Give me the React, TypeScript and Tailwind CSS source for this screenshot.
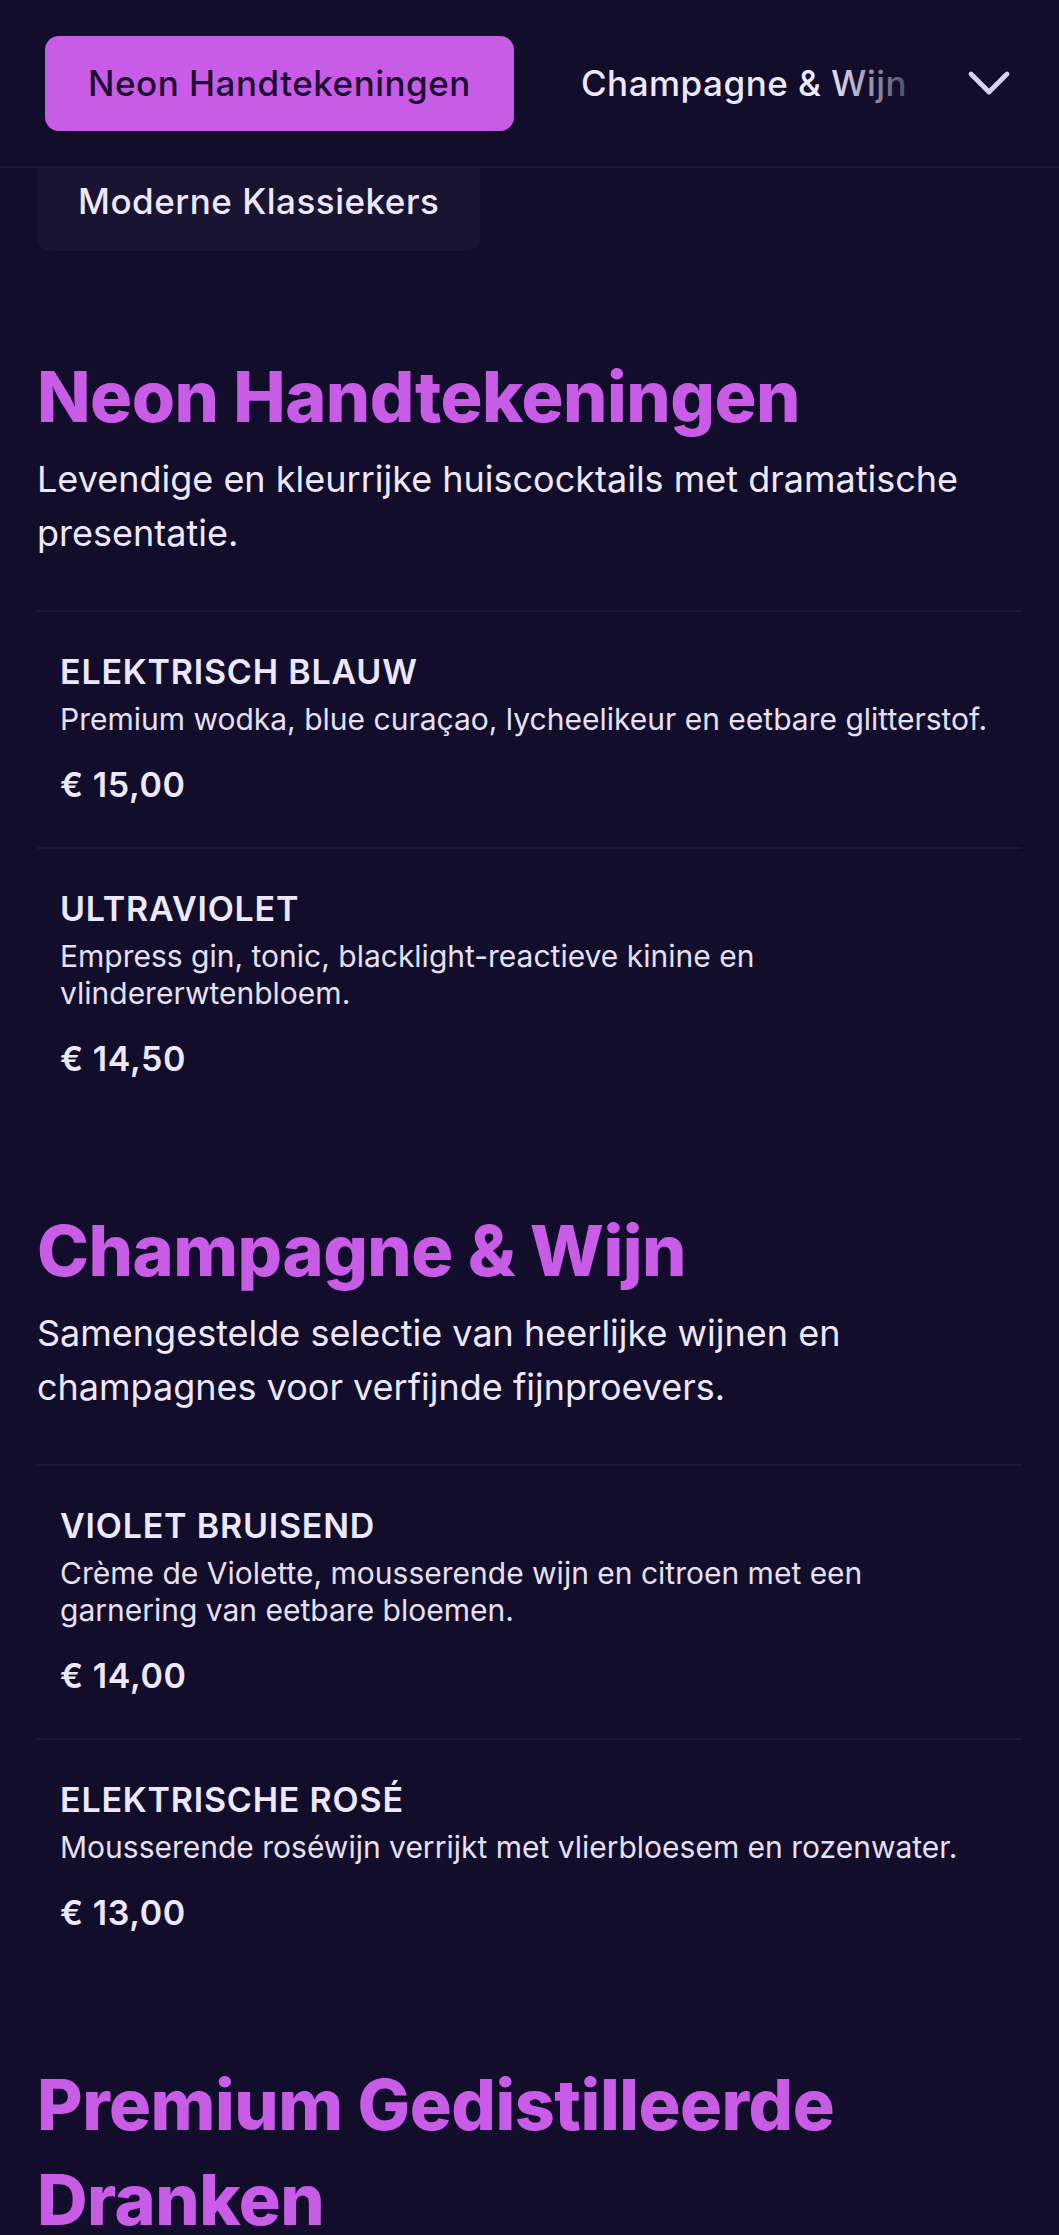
import React from 'react';
import { ChevronDown } from 'lucide-react';

type Item = { name: string; description: string; price: string };
type Section = { title: string; description?: string; items: Item[] };

const sections: Section[] = [
  {
    title: 'Neon Handtekeningen',
    description: 'Levendige en kleurrijke huiscocktails met dramatische presentatie.',
    items: [
      {
        name: 'Elektrisch Blauw',
        description: 'Premium wodka, blue curaçao, lycheelikeur en eetbare glitterstof.',
        price: '€ 15,00',
      },
      {
        name: 'Ultraviolet',
        description: 'Empress gin, tonic, blacklight-reactieve kinine en vlindererwtenbloem.',
        price: '€ 14,50',
      },
    ],
  },
  {
    title: 'Champagne & Wijn',
    description: 'Samengestelde selectie van heerlijke wijnen en champagnes voor verfijnde fijnproevers.',
    items: [
      {
        name: 'Violet Bruisend',
        description: 'Crème de Violette, mousserende wijn en citroen met een garnering van eetbare bloemen.',
        price: '€ 14,00',
      },
      {
        name: 'Elektrische Rosé',
        description: 'Mousserende roséwijn verrijkt met vlierbloesem en rozenwater.',
        price: '€ 13,00',
      },
    ],
  },
  {
    // rest of this section is below the fold
    title: 'Premium Gedistilleerde Dranken',
    items: [],
  },
];

const MenuItem: React.FC<{ item: Item }> = ({ item }) => (
  <div className="border-t-2 border-[#1c1736] px-[23px] pt-[40px] pb-[42px]">
    <h3 className="text-[34px] leading-[40px] font-semibold tracking-[0.8px] uppercase text-[#ede8fd]">
      {item.name}
    </h3>
    <p className="mt-[9px] text-[30px] leading-[37px] text-[#e6e0f6]">{item.description}</p>
    <p className="mt-[27px] text-[34px] leading-[40px] font-semibold tracking-[0.6px] text-[#ede8fd]">
      {item.price}
    </p>
  </div>
);

export default function App() {
  return (
    <div
      className="h-[2235px] overflow-hidden bg-[#110d2a] text-[#ede8fd]"
      style={{ fontFamily: 'Inter, "Noto Sans", sans-serif' }}
    >
      {/* Category tabs */}
      <header className="flex h-[168px] items-center border-b-2 border-[#1c1736] pl-[45px] pr-[50px]">
        <div className="relative flex flex-1 items-center gap-[24px] overflow-hidden whitespace-nowrap">
          <button className="flex h-[95px] shrink-0 items-center rounded-[14px] bg-[#c85ce7] px-[43px] text-[35px] font-medium tracking-[0.5px] text-[#1b0c31]">
            Neon Handtekeningen
          </button>
          <button className="flex h-[95px] shrink-0 items-center px-[43px] text-[35px] font-medium tracking-[0.5px] text-[#ede8fd]">
            Champagne &amp; Wijn
          </button>
          <div className="pointer-events-none absolute top-0 right-0 h-full w-[110px] bg-gradient-to-l from-[#110d2a] to-transparent" />
        </div>
        <button className="ml-[30px] flex shrink-0 items-center text-[#d9d2f6]" aria-label="Meer categorieën">
          <ChevronDown size={72} strokeWidth={1.6} className="-mx-[16px]" />
        </button>
      </header>

      {/* second row of tabs, partly under the header */}
      <div className="ml-[37px] flex h-[83px] w-[443px] items-center rounded-b-[14px] bg-[#1a1433] pb-[16px] pl-[41px] text-[35px] font-medium tracking-[0.5px] text-[#ede8fd]">
        Moderne Klassiekers
      </div>

      <main className="px-[37px] pt-[98px]">
        {sections.map((section, i) => (
          <section key={section.title} className={i > 0 ? 'mt-[82px]' : ''}>
            <h2 className="text-[70px] leading-[95px] font-extrabold tracking-[-0.5px] text-[#c85ce7]">
              {section.title}
            </h2>
            {section.description && (
              <p className="mt-[8px] text-[36px] leading-[54px] text-[#ede8fd]">{section.description}</p>
            )}
            {section.items.length > 0 && (
              <div className="mt-[50px]">
                {section.items.map(item => (
                  <MenuItem key={item.name} item={item} />
                ))}
              </div>
            )}
          </section>
        ))}
      </main>
    </div>
  );
}
